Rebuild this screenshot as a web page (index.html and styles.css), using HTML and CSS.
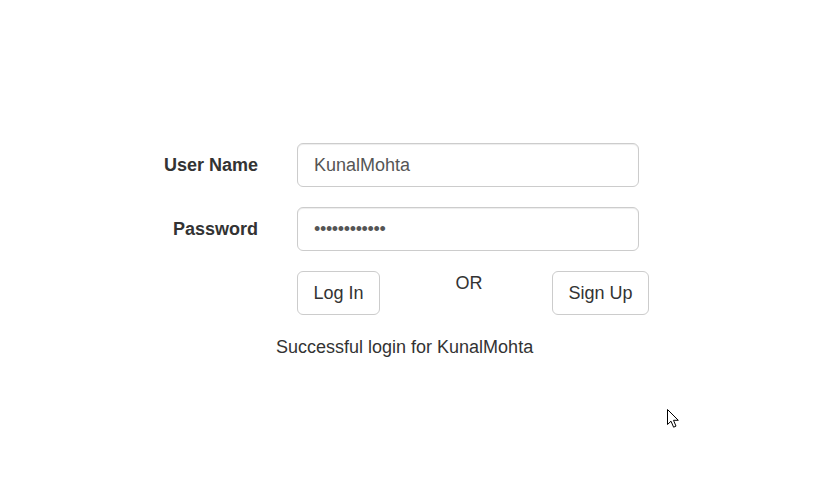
FILE: index.html
```html
<!DOCTYPE html>
<html>
<head>
<meta charset="utf-8">
<link rel="stylesheet" href="styles.css">
</head>
<body>
<div class="page">
  <form class="form">
    <label class="label" for="user">User Name</label>
    <input class="field" id="user" type="text" value="KunalMohta">
    <label class="label" for="pass">Password</label>
    <input class="field field-pass" id="pass" type="password" value="KunalMohta12">
    <div class="spacer"></div>
    <div class="actions">
      <button type="button" class="btn">Log In</button>
      <span class="or">OR</span>
      <button type="button" class="btn">Sign Up</button>
    </div>
  </form>
  <p class="message">Successful login for KunalMohta</p>
</div>
<svg class="cursor" width="14" height="22" viewBox="0 0 14 22">
  <path d="M1.5 1.5 L1.5 16.5 L5 13.2 L7.6 19.2 L10 18.1 L7.5 12.3 L12.3 12.3 Z" fill="#fff" stroke="#000" stroke-width="1" stroke-linejoin="round"/>
</svg>
</body>
</html>
```
FILE: styles.css
```css
html, body {
  margin: 0;
  padding: 0;
  background: #fff;
}
body {
  font-family: "Liberation Sans", Arial, sans-serif;
  font-size: 18px;
  line-height: 1.42857;
  color: #333;
  width: 825px;
  height: 483px;
  overflow: hidden;
  position: relative;
}
.page {
  padding-top: 143px;
}
.form {
  display: grid;
  grid-template-columns: 258px 342px;
  column-gap: 39px;
  row-gap: 20px;
  margin: 0;
}
.label {
  font-weight: bold;
  text-align: right;
  align-self: center;
  padding-top: 1px;
}
.field {
  box-sizing: border-box;
  width: 342px;
  height: 44px;
  padding: 10px 16px;
  font-family: inherit;
  font-size: 18px;
  color: #555;
  background: #fff;
  border: 1px solid #ccc;
  border-radius: 6px;
  box-shadow: inset 0 1px 1px rgba(0,0,0,.075);
  outline: none;
  margin: 0;
}
.field-pass {
  letter-spacing: -0.35px;
}
.actions {
  display: flex;
  justify-content: space-between;
  align-items: flex-start;
  width: 352px;
}
.btn {
  box-sizing: border-box;
  height: 44px;
  padding: 0 15.5px;
  font-family: inherit;
  font-size: 18px;
  color: #333;
  background: #fff;
  border: 1px solid #ccc;
  border-radius: 6px;
  margin: 0;
}
.or {
  display: block;
  padding-left: 6px;
}
.message {
  margin: 20px 0 0 276px;
}
.cursor {
  position: absolute;
  left: 666px;
  top: 408px;
}
```
